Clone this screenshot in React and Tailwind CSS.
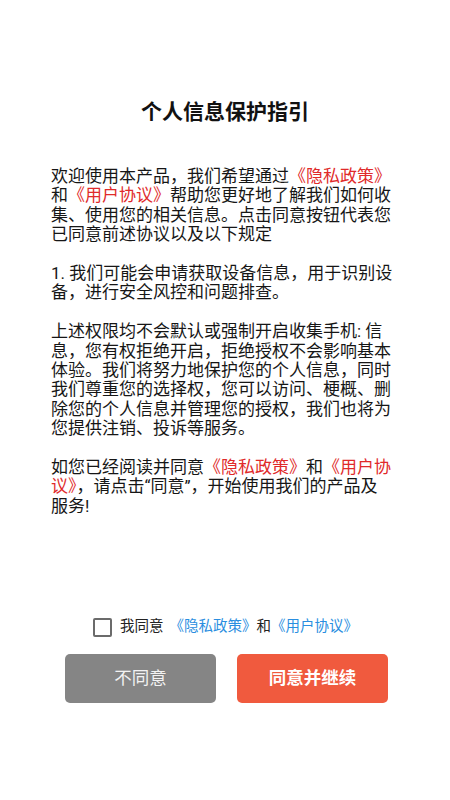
import React, { useState } from 'react';

const FONT = { fontFamily: 'Roboto, "Noto Sans CJK SC", sans-serif' };

function Red({ children }) {
  return <span className="text-[#e02a2a]">{children}</span>;
}

function Blue({ children }) {
  return <span className="text-[#2a8ee0]">{children}</span>;
}

function Lines({ lines }) {
  return (
    <div className="mb-[19.4px]">
      {lines.map((line, i) => (
        <div key={i} className="whitespace-nowrap">
          {line}
        </div>
      ))}
    </div>
  );
}

export default function App() {
  const [checked, setChecked] = useState(false);

  return (
    <div className="h-[800px] w-full bg-white flex flex-col" style={FONT}>
      <h1 className="pt-[98px] text-center text-[21px] leading-[28px] font-bold text-[#111]">
        个人信息保护指引
      </h1>

      <div className="mt-[41px] pl-[51px] text-[17px] leading-[19.4px] text-[#161616]">
        <Lines
          lines={[
            <>欢迎使用本产品，我们希望通过<Red>《隐私政策》</Red></>,
            <>和<Red>《用户协议》</Red>帮助您更好地了解我们如何收</>,
            '集、使用您的相关信息。点击同意按钮代表您',
            '已同意前述协议以及以下规定',
          ]}
        />
        <Lines
          lines={['1. 我们可能会申请获取设备信息，用于识别设', '备，进行安全风控和问题排查。']}
        />
        <Lines
          lines={[
            '上述权限均不会默认或强制开启收集手机: 信',
            '息，您有权拒绝开启，拒绝授权不会影响基本',
            '体验。我们将努力地保护您的个人信息，同时',
            '我们尊重您的选择权，您可以访问、梗概、删',
            '除您的个人信息并管理您的授权，我们也将为',
            '您提供注销、投诉等服务。',
          ]}
        />
        <Lines
          lines={[
            <>如您已经阅读并同意<Red>《隐私政策》</Red>和<Red>《用户协</Red></>,
            <><Red>议》</Red>，请点击“同意”，开始使用我们的产品及</>,
            '服务!',
          ]}
        />
      </div>

      <div className="flex-1" />

      <div className="flex items-center pl-[93px] text-[14.5px] leading-[20px] text-[#222]">
        <button
          onClick={() => setChecked(!checked)}
          className="w-[19px] h-[19px] border-2 border-[#6b6b6b] rounded-[2px] flex items-center justify-center"
        >
          {checked && <span className="w-[9px] h-[9px] bg-[#6b6b6b]" />}
        </button>
        <span className="ml-[8px]">我同意</span>
        <span className="ml-[6px]">
          <Blue>《隐私政策》</Blue>和<Blue>《用户协议》</Blue>
        </span>
      </div>

      <div className="mt-[17px] mb-[97px] flex pl-[65px] gap-[21px]">
        <button className="w-[151px] h-[49px] rounded-[5px] bg-[#858585] text-[#f2f2f2] text-[17.5px]">
          不同意
        </button>
        <button className="w-[151px] h-[49px] rounded-[5px] bg-[#f05a3e] text-white text-[17.5px] font-bold">
          同意并继续
        </button>
      </div>
    </div>
  );
}
